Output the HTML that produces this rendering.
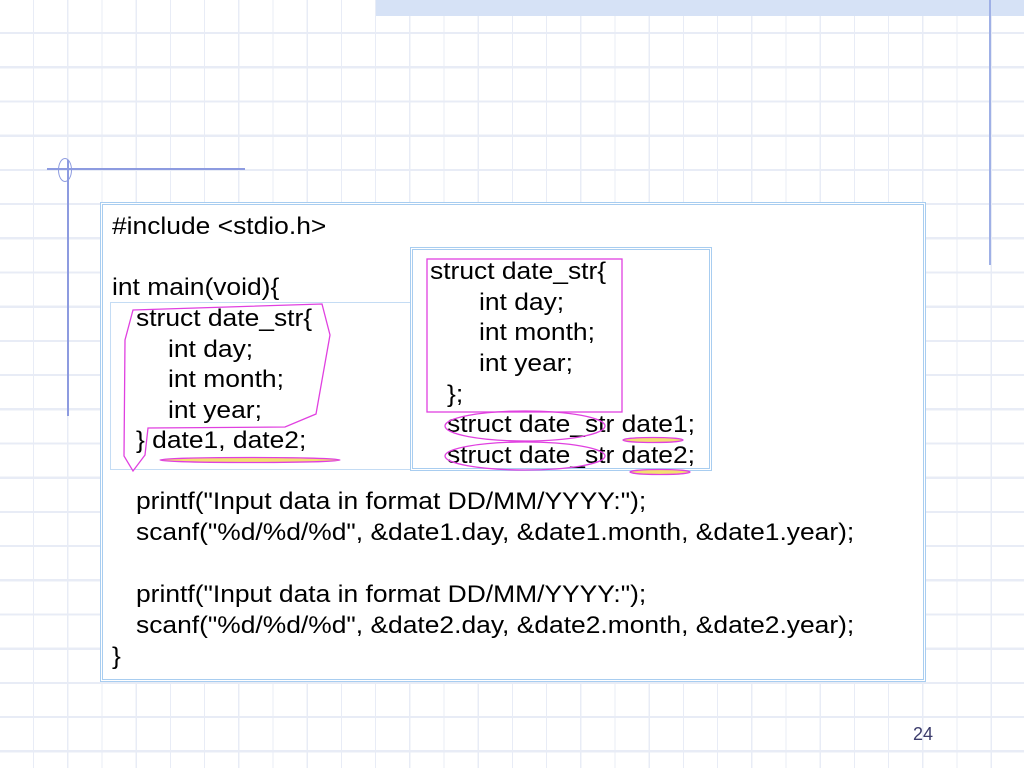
<!DOCTYPE html>
<html><head><meta charset="utf-8"><style>
html,body{margin:0;padding:0}
body{width:1024px;height:768px;position:relative;overflow:hidden;background:#fff;
background-image:repeating-linear-gradient(to right,transparent 0,transparent 33px,#e8ecf6 33px,#e8ecf6 34.2px),
repeating-linear-gradient(to bottom,transparent 0,transparent 32px,#e8ecf6 32px,#e8ecf6 34.2px);
font-family:"Liberation Sans",Arial,sans-serif}
.a{position:absolute}
.t{position:absolute;font-size:24px;line-height:31px;white-space:pre;color:#000;transform:scaleX(1.1);transform-origin:0 50%}
</style></head><body>
<div class="a" style="left:376px;top:0;width:648px;height:16px;background:#d6e2f6"></div>
<div class="a" style="left:989px;top:0;width:2px;height:265px;background:#9fb0e6"></div>
<div class="a" style="left:47px;top:168px;width:198px;height:2px;background:#8d9be0"></div>
<div class="a" style="left:67px;top:160px;width:2px;height:256px;background:#8d9be0"></div>
<div class="a" style="left:58px;top:158px;width:12px;height:22px;border:1px solid #8d9be0;border-radius:50%"></div>

<div class="a" style="left:100px;top:202px;width:820px;height:474px;border:3px double #a8cdf0;background:#fff"></div>
<div class="a" style="left:110px;top:302px;width:300px;height:166px;border:1px solid #c4dcf4"></div>
<div class="a" style="left:410px;top:247px;width:296px;height:218px;border:3px double #a8cdf0;background:#fff"></div>

<div class="t" style="left:112px;top:211px">#include &lt;stdio.h&gt;</div>
<div class="t" style="left:112px;top:272px">int main(void){</div>
<div class="t" style="left:136px;top:303px">struct date_str{</div>
<div class="t" style="left:168px;top:334px">int day;</div>
<div class="t" style="left:168px;top:364px">int month;</div>
<div class="t" style="left:168px;top:395px">int year;</div>
<div class="t" style="left:136px;top:425px">} date1, date2;</div>
<div class="t" style="left:136px;top:486px">printf("Input data in format DD/MM/YYYY:");</div>
<div class="t" style="left:136px;top:517px">scanf("%d/%d/%d", &amp;date1.day, &amp;date1.month, &amp;date1.year);</div>
<div class="t" style="left:136px;top:579px">printf("Input data in format DD/MM/YYYY:");</div>
<div class="t" style="left:136px;top:610px">scanf("%d/%d/%d", &amp;date2.day, &amp;date2.month, &amp;date2.year);</div>
<div class="t" style="left:112px;top:641px">}</div>

<div class="t" style="left:430px;top:256px">struct date_str{</div>
<div class="t" style="left:479px;top:287px">int day;</div>
<div class="t" style="left:479px;top:317px">int month;</div>
<div class="t" style="left:479px;top:348px">int year;</div>
<div class="t" style="left:447px;top:379px">};</div>
<div class="t" style="left:447px;top:409px">struct date_str date1;</div>
<div class="t" style="left:447px;top:440px">struct date_str date2;</div>

<svg class="a" style="left:0;top:0" width="1024" height="768" fill="none" stroke="#e040e0" stroke-width="1.3">
<path d="M133 310 L322 304 L330 335 L316 414 L285 427 L148 428 L145 455 L133 471 L124 456 L125 340 Z"/>
<rect x="427" y="259" width="195" height="153"/>
<ellipse cx="525" cy="426" rx="80" ry="15"/>
<ellipse cx="525" cy="456" rx="80" ry="14"/>
<ellipse cx="250" cy="460" rx="90" ry="2.5" fill="#f4e070"/>
<ellipse cx="653" cy="440" rx="30" ry="2.5" fill="#f4e070"/>
<ellipse cx="660" cy="472" rx="30" ry="2.5" fill="#f4e070"/>
</svg>
<div class="a" style="left:913px;top:724px;font-size:18px;color:#3c3c6c">24</div>
</body></html>
